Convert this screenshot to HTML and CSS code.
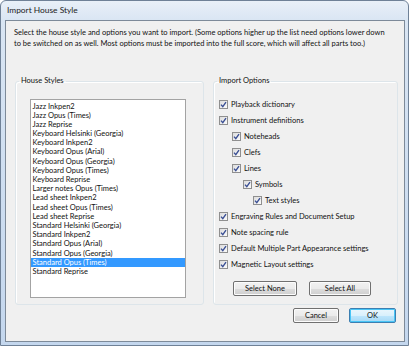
FILE: index.html
```html
<!DOCTYPE html>
<html>
<head>
<meta charset="utf-8">
<link rel="stylesheet" href="styles.css">
</head>
<body>
<div class="window">
  <div class="titlebar">Import House Style</div>
  <div class="client">
    <p class="intro">Select the house style and options you want to import. (Some options higher up the list need options lower down<br>to be switched on as well. Most options must be imported into the full score, which will affect all parts too.)</p>
    <div class="groups">
      <fieldset class="group">
        <legend>House Styles</legend>
        <ul class="listbox">
          <li>Jazz Inkpen2</li>
          <li>Jazz Opus (Times)</li>
          <li>Jazz Reprise</li>
          <li>Keyboard Helsinki (Georgia)</li>
          <li>Keyboard Inkpen2</li>
          <li>Keyboard Opus (Arial)</li>
          <li>Keyboard Opus (Georgia)</li>
          <li>Keyboard Opus (Times)</li>
          <li>Keyboard Reprise</li>
          <li>Larger notes Opus (Times)</li>
          <li>Lead sheet Inkpen2</li>
          <li>Lead sheet Opus (Times)</li>
          <li>Lead sheet Reprise</li>
          <li>Standard Helsinki (Georgia)</li>
          <li>Standard Inkpen2</li>
          <li>Standard Opus (Arial)</li>
          <li>Standard Opus (Georgia)</li>
          <li class="selected">Standard Opus (Times)</li>
          <li>Standard Reprise</li>
        </ul>
      </fieldset>
      <fieldset class="group">
        <legend>Import Options</legend>
        <ul class="checks">
          <li class="lv0"><span class="box"><svg viewBox="0 0 7 7"><path d="M1 3.6 L2.8 5.6 L6 1.2"/></svg></span>Playback dictionary</li>
          <li class="lv0"><span class="box"><svg viewBox="0 0 7 7"><path d="M1 3.6 L2.8 5.6 L6 1.2"/></svg></span>Instrument definitions</li>
          <li class="lv1"><span class="box"><svg viewBox="0 0 7 7"><path d="M1 3.6 L2.8 5.6 L6 1.2"/></svg></span>Noteheads</li>
          <li class="lv1"><span class="box"><svg viewBox="0 0 7 7"><path d="M1 3.6 L2.8 5.6 L6 1.2"/></svg></span>Clefs</li>
          <li class="lv1"><span class="box"><svg viewBox="0 0 7 7"><path d="M1 3.6 L2.8 5.6 L6 1.2"/></svg></span>Lines</li>
          <li class="lv2"><span class="box"><svg viewBox="0 0 7 7"><path d="M1 3.6 L2.8 5.6 L6 1.2"/></svg></span>Symbols</li>
          <li class="lv3"><span class="box"><svg viewBox="0 0 7 7"><path d="M1 3.6 L2.8 5.6 L6 1.2"/></svg></span>Text styles</li>
          <li class="lv0"><span class="box"><svg viewBox="0 0 7 7"><path d="M1 3.6 L2.8 5.6 L6 1.2"/></svg></span>Engraving Rules and Document Setup</li>
          <li class="lv0"><span class="box"><svg viewBox="0 0 7 7"><path d="M1 3.6 L2.8 5.6 L6 1.2"/></svg></span>Note spacing rule</li>
          <li class="lv0"><span class="box"><svg viewBox="0 0 7 7"><path d="M1 3.6 L2.8 5.6 L6 1.2"/></svg></span>Default Multiple Part Appearance settings</li>
          <li class="lv0"><span class="box"><svg viewBox="0 0 7 7"><path d="M1 3.6 L2.8 5.6 L6 1.2"/></svg></span>Magnetic Layout settings</li>
        </ul>
        <div class="select-btns">
          <button class="btn sel-none">Select None</button>
          <button class="btn sel-all">Select All</button>
        </div>
      </fieldset>
    </div>
    <div class="footer">
      <button class="btn cancel">Cancel</button>
      <button class="btn ok">OK</button>
    </div>
  </div>
</div>
</body>
</html>
```

FILE: styles.css
```css
html, body {
  margin: 0;
  padding: 0;
  background: #ffffff;
  overflow: hidden;
}

.window {
  box-sizing: border-box;
  width: 409px;
  height: 346px;
  border: 1px solid #6f8197;
  border-radius: 6px 6px 0 0;
  background: linear-gradient(#e9f0f8 0px, #d9e5f3 20px, #c4d7ee 100%);
  padding: 0 3px 3px 4px;
  display: flex;
  flex-direction: column;
  font-family: Lato, "Noto Sans", sans-serif;
  font-size: 7.5px;
  color: #111;
}

.titlebar {
  height: 19px;
  line-height: 19px;
  padding-left: 2px;
  font-size: 8.4px;
  color: #222;
}

.client {
  flex: 1;
  border: 1px solid #7d8a99;
  background: #f0f0f0;
  padding: 7px 6px 0 9px;
  display: flex;
  flex-direction: column;
}

.intro {
  margin: 0 0 0 -1px;
  line-height: 10.5px;
  white-space: nowrap;
}

.groups {
  margin-top: 27px;
  display: grid;
  grid-template-columns: 189px 185px;
  column-gap: 9px;
}

.group {
  box-sizing: border-box;
  height: 229px;
  margin: 0;
  padding: 0;
  border: 1px solid #dde5ea;
  border-radius: 3px;
  box-shadow: inset 1px 1px 0 #ffffff;
  min-width: 0;
}

.group legend {
  margin-left: 3px;
  padding: 0 2px;
  line-height: 10.5px;
}

.listbox {
  list-style: none;
  margin: 12px 0 0 14px;
  padding: 2px 0 0 0;
  width: 156px;
  height: 199px;
  box-sizing: border-box;
  border: 1px solid #a3a3a3;
  background: #ffffff;
}

.listbox li {
  height: 9.2px;
  line-height: 9.2px;
  padding-left: 1.5px;
  white-space: nowrap;
}

.listbox li.selected {
  background: #3399ff;
  color: #ffffff;
}

.checks {
  list-style: none;
  margin: 10px 0 0 5px;
  padding: 0;
}

.checks li {
  height: 16px;
  display: flex;
  align-items: center;
  white-space: nowrap;
}

.checks li.lv1 { padding-left: 13px; }
.checks li.lv2 { padding-left: 24px; }
.checks li.lv3 { padding-left: 34px; }

.box {
  box-sizing: border-box;
  width: 9px;
  height: 9px;
  margin-right: 3px;
  border: 1px solid #8f8f8f;
  background: linear-gradient(135deg, #dcdcdc, #fbfbfb);
  display: flex;
  align-items: center;
  justify-content: center;
  flex: none;
}

.box svg {
  width: 7px;
  height: 7px;
  fill: none;
  stroke: #3a4f94;
  stroke-width: 1.4;
}

.select-btns {
  display: flex;
  gap: 12px;
  margin: 8px 0 0 19px;
}

.btn {
  box-sizing: border-box;
  height: 15px;
  padding: 0;
  font-family: inherit;
  font-size: 7.5px;
  color: #111;
  border: 1px solid #707070;
  border-radius: 2px;
  background: linear-gradient(#f2f2f2 0%, #ebebeb 50%, #dddddd 51%, #cfcfcf 100%);
  box-shadow: inset 0 0 0 1px #fcfcfc;
}

.sel-none { width: 64px; }
.sel-all { width: 62px; }

.footer {
  display: flex;
  justify-content: flex-end;
  gap: 10px;
  margin: 3px 2px 0 0;
}

.cancel { width: 46px; }
.ok {
  width: 47px;
  border-color: #3c7fb1;
  background: linear-gradient(#eaf6fd 0%, #d9f0fc 50%, #bee6fd 51%, #a7d9f5 100%);
  box-shadow: inset 0 0 0 1px #48c5f6;
}
```
